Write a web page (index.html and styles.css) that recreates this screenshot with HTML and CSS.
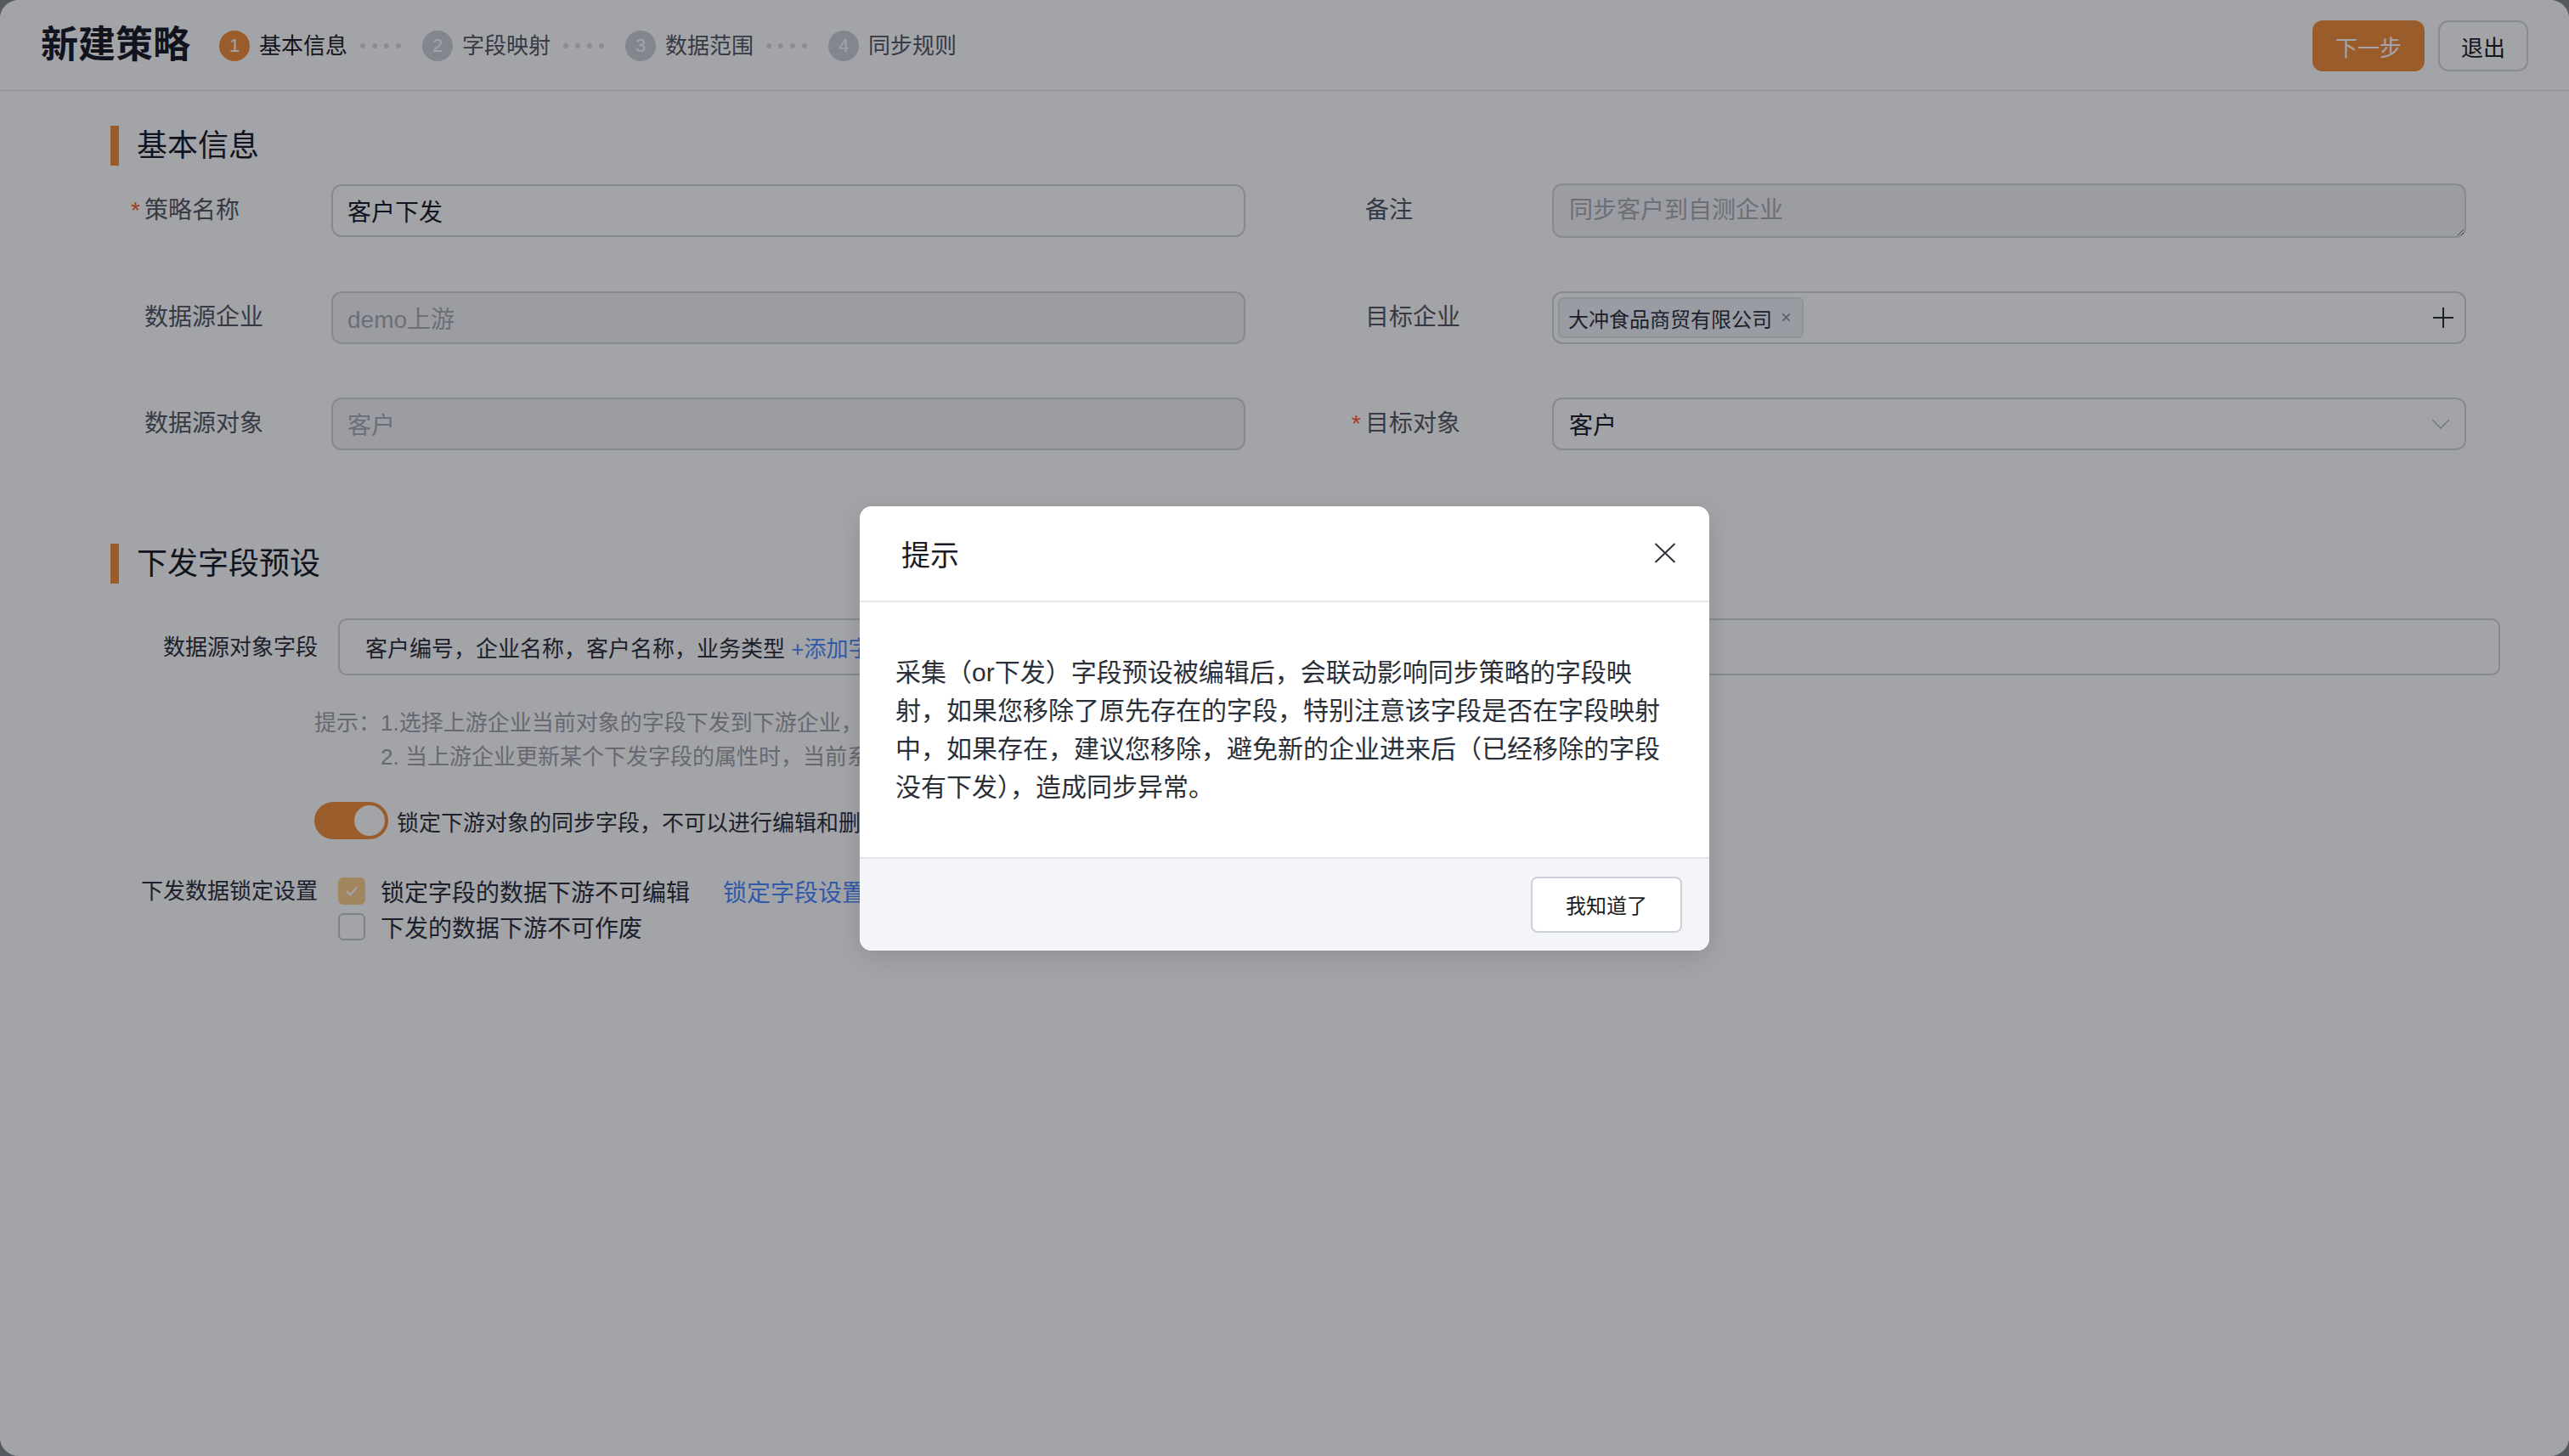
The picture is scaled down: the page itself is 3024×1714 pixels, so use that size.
FILE: index.html
```html
<!DOCTYPE html>
<html lang="zh-CN">
<head>
<meta charset="utf-8">
<title>新建策略</title>
<link rel="stylesheet" href="styles.css">
</head>
<body>
<div class="app">
  <header class="topbar">
    <div class="topbar-left">
      <h1 class="page-title">新建策略</h1>
      <ol class="steps">
        <li class="step active"><span class="step-num">1</span><span class="step-label">基本信息</span></li>
        <li class="step-sep"><i></i><i></i><i></i><i></i></li>
        <li class="step"><span class="step-num">2</span><span class="step-label">字段映射</span></li>
        <li class="step-sep"><i></i><i></i><i></i><i></i></li>
        <li class="step"><span class="step-num">3</span><span class="step-label">数据范围</span></li>
        <li class="step-sep"><i></i><i></i><i></i><i></i></li>
        <li class="step"><span class="step-num">4</span><span class="step-label">同步规则</span></li>
      </ol>
    </div>
    <div class="topbar-actions">
      <button class="btn btn-primary">下一步</button>
      <button class="btn btn-default">退出</button>
    </div>
  </header>

  <main class="content">
    <section class="section">
      <h2 class="section-title">基本信息</h2>
      <div class="form-grid">
        <div class="form-item">
          <label class="form-label"><span class="req">*</span>策略名称</label>
          <input class="input" value="客户下发">
        </div>
        <div class="form-item">
          <label class="form-label"><span class="req"></span>备注</label>
          <textarea class="input textarea" placeholder="同步客户到自测企业"></textarea>
        </div>
        <div class="form-item">
          <label class="form-label"><span class="req"></span>数据源企业</label>
          <input class="input disabled" value="demo上游" disabled>
        </div>
        <div class="form-item">
          <label class="form-label"><span class="req"></span>目标企业</label>
          <div class="input tag-input">
            <span class="tag">大冲食品商贸有限公司<span class="tag-close">×</span></span>
            <svg class="plus-icon" width="26" height="26" viewBox="0 0 26 26"><path d="M13 1V25M1 13H25" stroke="#2b2f38" stroke-width="2" fill="none"/></svg>
          </div>
        </div>
        <div class="form-item">
          <label class="form-label"><span class="req"></span>数据源对象</label>
          <input class="input disabled" value="客户" disabled>
        </div>
        <div class="form-item">
          <label class="form-label"><span class="req">*</span>目标对象</label>
          <div class="input select">
            <span>客户</span>
            <svg class="chevron" width="22" height="12" viewBox="0 0 22 12"><path d="M1 1L11 11L21 1" stroke="#b9bcc3" stroke-width="1.6" fill="none"/></svg>
          </div>
        </div>
      </div>
    </section>

    <section class="section section-preset">
      <h2 class="section-title">下发字段预设</h2>
      <div class="preset-row">
        <span class="preset-label">数据源对象字段</span>
        <div class="field-box">客户编号，企业名称，客户名称，业务类型 <a class="link">+添加字段</a></div>
      </div>
      <div class="tip">
        <span class="tip-head">提示：</span>
        <div class="tip-lines">
          <p>1.选择上游企业当前对象的字段下发到下游企业，</p>
          <p>2. 当上游企业更新某个下发字段的属性时，当前系统</p>
        </div>
      </div>
      <div class="switch-row">
        <span class="switch on"><span class="knob"></span></span>
        <span class="switch-label">锁定下游对象的同步字段，不可以进行编辑和删除</span>
      </div>
      <div class="lock-row">
        <span class="preset-label">下发数据锁定设置</span>
        <div class="lock-options">
          <div class="check-item">
            <span class="checkbox checked"><svg width="20" height="20" viewBox="0 0 20 20"><path d="M4 10L8.5 14.5L16 5.5" stroke="#fff" stroke-width="2" fill="none"/></svg></span>
            <span class="check-text">锁定字段的数据下游不可编辑</span>
            <a class="link lock-link">锁定字段设置</a>
          </div>
          <div class="check-item">
            <span class="checkbox"></span>
            <span class="check-text">下发的数据下游不可作废</span>
          </div>
        </div>
      </div>
    </section>
  </main>

  <div class="mask"></div>
  <div class="modal-wrap">
    <div class="modal">
      <div class="modal-header">
        <h3 class="modal-title">提示</h3>
        <svg class="modal-close" width="26" height="24" viewBox="0 0 26 24"><path d="M1.5 1L24.5 23M24.5 1L1.5 23" stroke="#2e3138" stroke-width="2" fill="none"/></svg>
      </div>
      <div class="modal-body">采集（or下发）字段预设被编辑后，会联动影响同步策略的字段映射，如果您移除了原先存在的字段，特别注意该字段是否在字段映射中，如果存在，建议您移除，避免新的企业进来后（已经移除的字段没有下发），造成同步异常。</div>
      <div class="modal-footer">
        <button class="btn-ok">我知道了</button>
      </div>
    </div>
  </div>
</div>
</body>
</html>
```

FILE: styles.css
```css
* {
  box-sizing: border-box;
  margin: 0;
  padding: 0;
}

html, body {
  height: 100%;
}

body {
  background: #575960;
  font-family: "Liberation Sans", "Noto Sans CJK SC", sans-serif;
  color: #181c25;
  overflow: hidden;
}

.app {
  position: relative;
  height: 100vh;
  background: #fff;
  border-radius: 22px;
  overflow: hidden;
}

/* ---------- top bar ---------- */
.topbar {
  height: 107px;
  border-bottom: 1px solid #dcdde2;
  display: flex;
  align-items: center;
  justify-content: space-between;
  padding: 0 48px;
}

.topbar-left {
  display: flex;
  align-items: center;
}

.page-title {
  font-size: 44px;
  line-height: 56px;
  font-weight: 600;
  color: #181c25;
  margin-right: 34px;
}

.steps {
  list-style: none;
  display: flex;
  align-items: center;
  padding-top: 2px;
}

.step {
  display: flex;
  align-items: center;
}

.step-num {
  width: 36px;
  height: 36px;
  border-radius: 50%;
  background: #cdd0d6;
  color: #fff;
  font-size: 22px;
  line-height: 36px;
  text-align: center;
}

.step.active .step-num {
  background: #f38d3c;
}

.step-label {
  margin-left: 11px;
  font-size: 26px;
  line-height: 36px;
  color: #545861;
}

.step.active .step-label {
  color: #181c25;
}

.step-sep {
  display: flex;
  gap: 8px;
  margin: 0 25px 0 15px;
}

.step-sep i {
  width: 6px;
  height: 6px;
  border-radius: 50%;
  background: #d9dbe0;
}

.topbar-actions {
  display: flex;
  gap: 16px;
  padding-top: 2px;
}

.btn {
  height: 60px;
  padding: 0 27px;
  font-family: inherit;
  font-size: 26px;
  border-radius: 12px;
  cursor: pointer;
}

.btn-primary {
  background: #f38d3c;
  color: #fff;
  border: none;
}

.btn-default {
  background: #fff;
  color: #181c25;
  border: 2px solid #d5d7dc;
  padding: 0 25px;
}

/* ---------- content ---------- */
.content {
  padding: 41px 0 0 130px;
}

.section-title {
  height: 47px;
  border-left: 10px solid #f38d3c;
  padding-left: 21px;
  font-size: 36px;
  line-height: 47px;
  font-weight: 400;
  color: #181c25;
}

.form-grid {
  margin: 21px 0 0 24px;
  display: grid;
  grid-template-columns: 1312px 1312px;
  column-gap: 125px;
  row-gap: 63px;
}

.form-item {
  display: flex;
  align-items: center;
}

.form-label {
  width: 236px;
  flex: none;
  display: flex;
  align-items: center;
  font-size: 28px;
  line-height: 40px;
  color: #545861;
}

.req {
  width: 16px;
  color: #ff5a2e;
  font-size: 28px;
}

.input {
  width: 1076px;
  height: 62px;
  border: 2px solid #d3d4d9;
  border-radius: 12px;
  padding: 0 17px;
  font-family: inherit;
  font-size: 28px;
  color: #181c25;
  background: #fff;
  outline: none;
}

.input.disabled {
  background: #f4f4f5;
  color: #a9abb1;
}

.textarea {
  height: 64px;
  padding: 10px 18px;
  line-height: 40px;
  resize: vertical;
  background: #f4f4f5;
}

.textarea::placeholder {
  color: #a9abb1;
}

.tag-input {
  display: flex;
  align-items: center;
  justify-content: space-between;
  padding: 0 12px 0 5px;
}

.tag {
  height: 48px;
  display: flex;
  align-items: center;
  padding: 0 12px 0 10px;
  border: 2px solid #dfe1e6;
  border-radius: 6px;
  background: #f1f3f7;
  font-size: 24px;
  color: #2b2f38;
}

.tag-close {
  margin-left: 10px;
  color: #8d9199;
  font-size: 22px;
}

.select {
  display: flex;
  align-items: center;
  justify-content: space-between;
  padding: 0 17px 0 18px;
}

/* ---------- preset section ---------- */
.section-preset {
  margin-top: 110px;
}

.preset-row {
  margin: 41px 0 0 24px;
  display: flex;
  align-items: center;
}

.preset-label {
  width: 220px;
  flex: none;
  margin-right: 24px;
  text-align: right;
  font-size: 26px;
  line-height: 42px;
  color: #2b2f38;
}

.field-box {
  width: 2545px;
  height: 67px;
  border: 2px solid #d3d4d9;
  border-radius: 10px;
  padding-left: 30px;
  display: flex;
  align-items: center;
  white-space: pre;
  font-size: 26px;
  color: #2b2f38;
}

.link {
  color: #4d8bff;
}

.tip {
  margin: 36px 0 0 240px;
  display: flex;
  font-size: 26px;
  line-height: 40px;
  color: #9fa2aa;
}

.switch-row {
  margin: 33px 0 0 240px;
  display: flex;
  align-items: center;
}

.switch {
  width: 87px;
  height: 44px;
  border-radius: 22px;
  background: #f38d3c;
  display: flex;
  align-items: center;
  justify-content: flex-end;
  padding: 4px;
}

.knob {
  width: 36px;
  height: 36px;
  border-radius: 50%;
  background: #fff;
}

.switch-label {
  margin-left: 10px;
  font-size: 26px;
  color: #2b2f38;
}

.lock-row {
  margin: 40px 0 0 24px;
  display: flex;
  align-items: flex-start;
}

.lock-options {
  display: flex;
  flex-direction: column;
}

.check-item {
  height: 42px;
  display: flex;
  align-items: center;
}

.checkbox {
  width: 32px;
  height: 32px;
  border: 2px solid #c7c9cf;
  border-radius: 6px;
  background: #fff;
  display: flex;
  align-items: center;
  justify-content: center;
}

.checkbox.checked {
  background: #fcd08c;
  border-color: #fcd08c;
}

.check-text {
  margin-left: 18px;
  font-size: 28px;
  color: #2b2f38;
}

.lock-link {
  margin-left: 39px;
  font-size: 28px;
}

/* ---------- modal ---------- */
.mask {
  position: absolute;
  inset: 0;
  background: rgba(6, 8, 20, 0.37);
}

.modal-wrap {
  position: absolute;
  inset: 0;
  display: flex;
  align-items: center;
  justify-content: center;
}

.modal {
  width: 1000px;
  background: #fff;
  border-radius: 14px;
  overflow: hidden;
  box-shadow: 0 8px 30px rgba(0, 0, 0, 0.12);
}

.modal-header {
  height: 113px;
  border-bottom: 2px solid #e6e7ec;
  display: flex;
  align-items: center;
  justify-content: space-between;
  padding: 0 39px 0 49px;
}

.modal-title {
  font-size: 34px;
  font-weight: 400;
  color: #181c25;
}

.modal-body {
  padding: 60px 42px;
  font-size: 30px;
  line-height: 45px;
  color: #2b2f38;
}

.modal-footer {
  height: 110px;
  border-top: 2px solid #e4e5ea;
  background: #f4f5f9;
  display: flex;
  align-items: center;
  justify-content: flex-end;
  padding: 0 32px 0 0;
}

.btn-ok {
  width: 178px;
  height: 66px;
  border: 2px solid #cdd0d8;
  border-radius: 8px;
  background: #fff;
  font-family: inherit;
  font-size: 24px;
  color: #181c25;
}
```
